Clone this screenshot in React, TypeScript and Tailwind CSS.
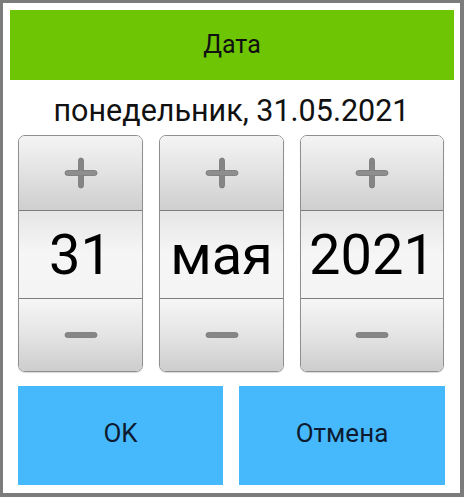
import React from "react";

const font = { fontFamily: "Roboto, 'Noto Sans', sans-serif" };

function PlusIcon() {
  return (
    <svg width="34" height="32" viewBox="0 0 34 32">
      <rect x="1" y="13.5" width="32" height="5" rx="2.5" fill="#858585" stroke="#767676" strokeWidth="0.8" />
      <rect x="14.5" y="1" width="5" height="30" rx="2.5" fill="#858585" stroke="#767676" strokeWidth="0.8" />
      <rect x="1.5" y="14" width="31" height="4" rx="2" fill="#8e8e8e" />
    </svg>
  );
}

function MinusIcon() {
  return (
    <svg width="34" height="8" viewBox="0 0 34 8">
      <rect x="1" y="1.5" width="32" height="5" rx="2.5" fill="#868686" stroke="#777777" strokeWidth="0.8" />
    </svg>
  );
}

function Spinner({ value, width }: { value: string; width: string }) {
  return (
    <div
      className={`${width} flex h-[237px] flex-col overflow-hidden rounded-[7px] border border-[#8f8f8f] shadow-[0_1px_1px_rgba(0,0,0,0.15)]`}
    >
      <div className="flex h-[74px] items-center justify-center bg-gradient-to-b from-[#f4f4f4] via-[#e2e2e2] to-[#cfcfcf]">
        <PlusIcon />
      </div>
      <div className="flex h-[89px] items-center justify-center border-y border-[#7d7d7d] bg-gradient-to-b from-[#e6e6e6] via-[#f6f6f6] to-[#f4f4f4]">
        <span className="text-[56px] leading-none text-black" style={font}>
          {value}
        </span>
      </div>
      <div className="flex flex-1 items-center justify-center bg-gradient-to-b from-[#f6f6f6] via-[#e4e4e4] to-[#cdcdcd]">
        <MinusIcon />
      </div>
    </div>
  );
}

export default function App() {
  return (
    <div
      className="flex h-[497px] w-[464px] flex-col border-b-[4px] border-l-[3px] border-r-[4px] border-t-[3px] border-[#7c7c7c] bg-white"
      style={font}
    >
      <div className="ml-[7px] mr-[6px] mt-[7px] flex h-[70px] items-center justify-center bg-[#6dc504]">
        <span className="text-[25px] text-[#111]">Дата</span>
      </div>
      <div className="flex h-[55px] items-center justify-center pt-[8px]">
        <span className="text-[30.5px] leading-none text-[#111]">понедельник, 31.05.2021</span>
      </div>
      <div className="flex gap-[16px] px-[15px]">
        <Spinner value="31" width="w-[125px]" />
        <Spinner value="мая" width="w-[125px]" />
        <Spinner value="2021" width="w-[144px]" />
      </div>
      <div className="mt-[14px] flex gap-[16px] px-[15px]">
        <button className="flex h-[99px] w-[205px] items-center justify-center bg-[#46b9fd] pb-[5px] text-[26px] text-[#0d1b30]">
          OK
        </button>
        <button className="flex h-[99px] w-[206px] items-center justify-center bg-[#46b9fd] pb-[5px] text-[26px] text-[#0d1b30]">
          Отмена
        </button>
      </div>
    </div>
  );
}
